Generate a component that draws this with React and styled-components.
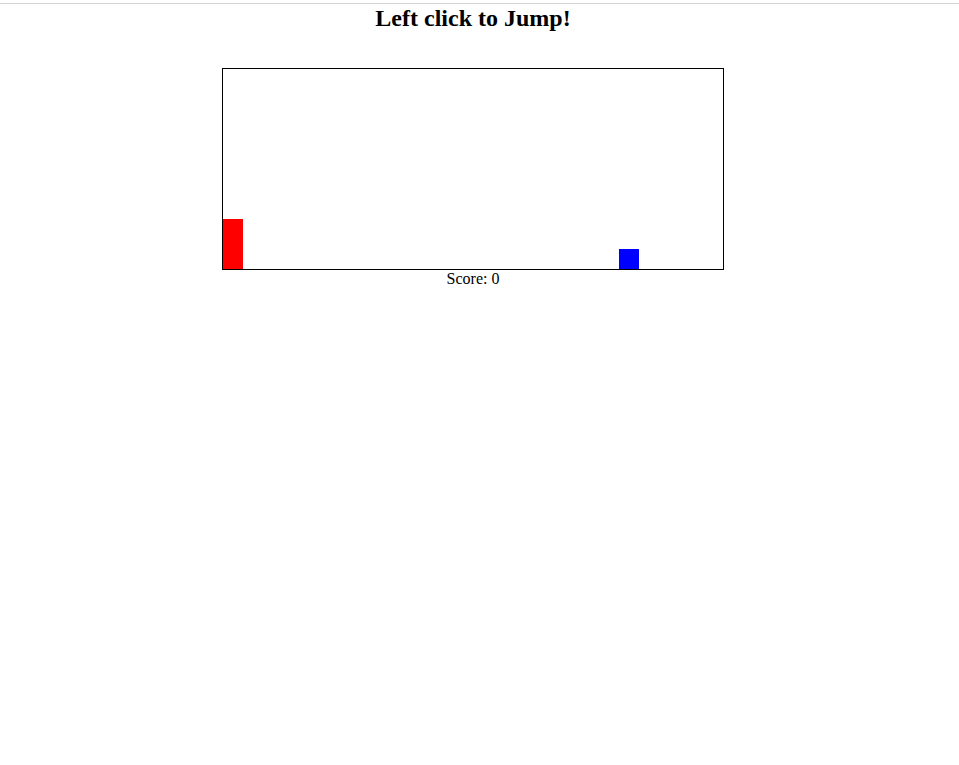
import React from 'react';
import styled, { createGlobalStyle } from 'styled-components';

const GlobalStyle = createGlobalStyle`
  body {
    margin: 0;
    background: #fff;
    font-family: "Liberation Serif", "Times New Roman", serif;
    color: #000;
  }
`;

const TopRule = styled.div`
  height: 1px;
  margin-top: 3px;
  background: #d3d3d3;
`;

const Page = styled.div`
  width: 946px;
  display: flex;
  flex-direction: column;
  align-items: center;
`;

const Title = styled.h2`
  margin: 0 0 36px 0;
  font-size: 24px;
  line-height: 28px;
  font-weight: bold;
  text-align: center;
`;

const Board = styled.div`
  position: relative;
  width: 500px;
  height: 200px;
  border: 1px solid #000;
`;

const Block = styled.div`
  position: absolute;
  bottom: 0;
  left: ${(p) => p.$x}px;
  width: ${(p) => p.$w}px;
  height: ${(p) => p.$h}px;
  background: ${(p) => p.$color};
`;

const Score = styled.div`
  font-size: 16px;
  line-height: 18px;
  text-align: center;
`;

const App = () => {
  const score = 0;
  return (
    <>
      <GlobalStyle />
      <TopRule />
      <Page>
        <Title>Left click to Jump!</Title>
        <Board>
          <Block $x={0} $w={20} $h={50} $color="#ff0000" />
          <Block $x={396} $w={20} $h={20} $color="#0000ff" />
        </Board>
        <Score>Score: {score}</Score>
      </Page>
    </>
  );
};

export default App;
